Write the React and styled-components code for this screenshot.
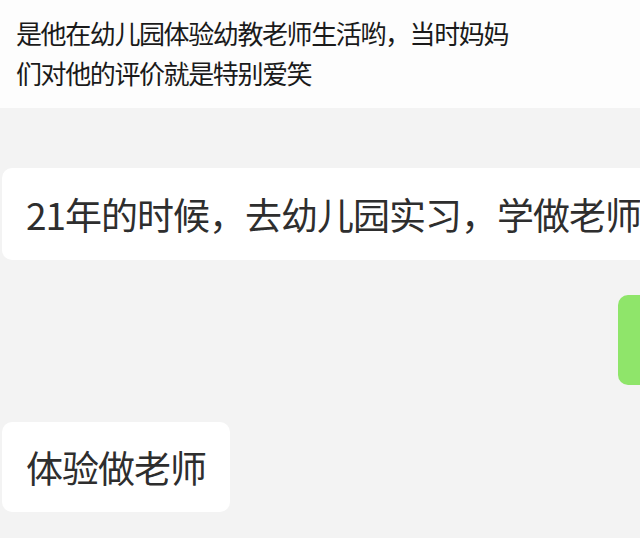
import React from "react";
import styled, { createGlobalStyle } from "styled-components";

const Global = createGlobalStyle`
  html, body {
    margin: 0;
    padding: 0;
    background: #f3f3f3;
    overflow: hidden;
  }
  body {
    font-family: "Noto Sans CJK SC", "Noto Sans", sans-serif;
  }
`;

const Page = styled.div`
  width: 640px;
  height: 538px;
  overflow: hidden;
  background: #f3f3f3;
`;

const Caption = styled.div`
  background: #fdfdfd;
  height: 108px;
  box-sizing: border-box;
  padding: 13px 110px 0 16px;
  font-size: 26px;
  letter-spacing: -1.4px;
  line-height: 40px;
  color: #1a1a1a;
`;

const Chat = styled.div`
  display: flex;
  flex-direction: column;
  padding: 60px 0 0 2px;
`;

const Row = styled.div`
  display: flex;
  justify-content: ${(p) => (p.$mine ? "flex-end" : "flex-start")};
  margin-bottom: ${(p) => p.$gap || 0}px;
`;

const Bubble = styled.div`
  background: #ffffff;
  border-radius: 10px;
  height: ${(p) => p.$h || 90}px;
  box-sizing: border-box;
  padding: 0 24px 0 24px;
  display: flex;
  align-items: center;
  font-size: 37px;
  letter-spacing: -1px;
  color: #2e2e2e;
  white-space: nowrap;
  flex-shrink: 0;
`;

const GreenBubble = styled.div`
  background: #8fe56a;
  width: 22px;
  height: 90px;
  border-radius: 10px 0 0 10px;
`;

export default function App() {
  return (
    <Page>
      <Global />
      <Caption>是他在幼儿园体验幼教老师生活哟，当时妈妈们对他的评价就是特别爱笑</Caption>
      <Chat>
        <Row $gap={35}>
          <Bubble $h={92}>21年的时候，去幼儿园实习，学做老师</Bubble>
        </Row>
        <Row $mine $gap={37}>
          <GreenBubble />
        </Row>
        <Row>
          <Bubble>体验做老师</Bubble>
        </Row>
      </Chat>
    </Page>
  );
}
